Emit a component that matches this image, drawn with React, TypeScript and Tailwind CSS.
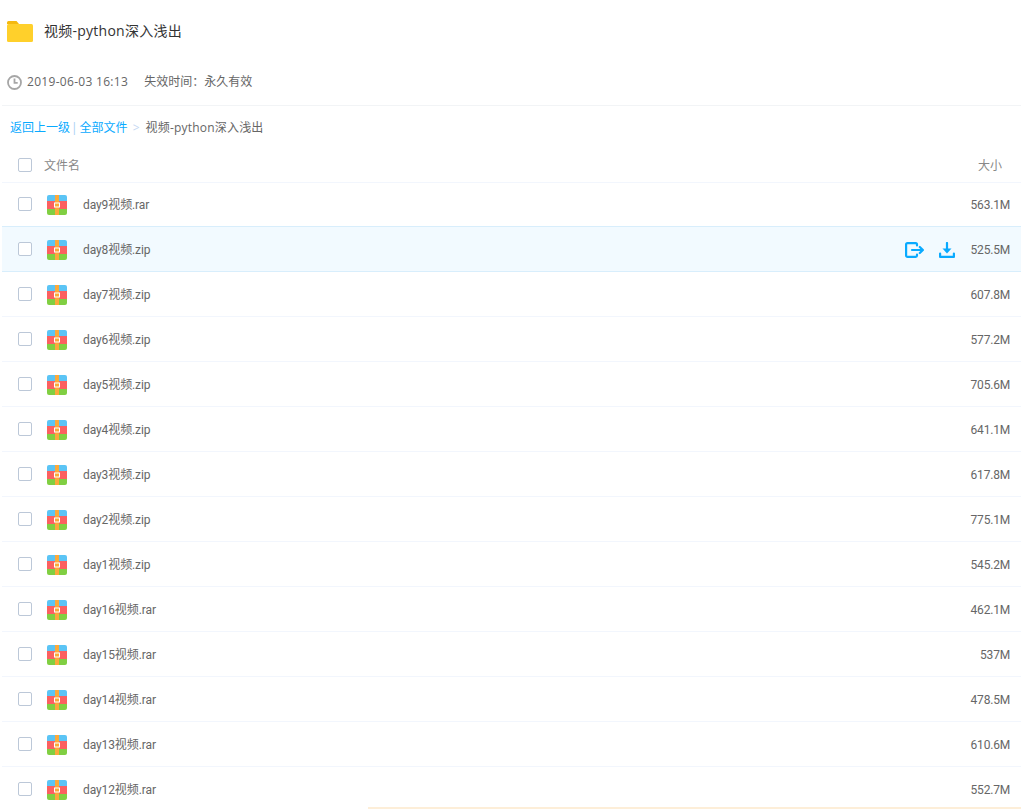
const files = [
  { name: 'day9视频.rar', size: '563.1M' },
  { name: 'day8视频.zip', size: '525.5M', active: true },
  { name: 'day7视频.zip', size: '607.8M' },
  { name: 'day6视频.zip', size: '577.2M' },
  { name: 'day5视频.zip', size: '705.6M' },
  { name: 'day4视频.zip', size: '641.1M' },
  { name: 'day3视频.zip', size: '617.8M' },
  { name: 'day2视频.zip', size: '775.1M' },
  { name: 'day1视频.zip', size: '545.2M' },
  { name: 'day16视频.rar', size: '462.1M' },
  { name: 'day15视频.rar', size: '537M' },
  { name: 'day14视频.rar', size: '478.5M' },
  { name: 'day13视频.rar', size: '610.6M' },
  { name: 'day12视频.rar', size: '552.7M' },
]

function FolderIcon() {
  return (
    <svg width="26" height="21" viewBox="0 0 26 21" className="shrink-0">
      <path d="M0 1.500A1.500 1.500 0 0 1 1.500 0h8L12 3H0z" fill="#f5b90f" />
      <rect x="0" y="3" width="26" height="18" rx="1.500" fill="#ffd02b" />
    </svg>
  )
}

function ClockIcon() {
  return (
    <svg width="15" height="15" viewBox="0 0 15 15" fill="none" stroke="#a6a6a6" strokeWidth="1.800" className="shrink-0">
      <circle cx="7.500" cy="7.500" r="6.500" />
      <path d="M7.500 3.500v4.300h3.200" />
    </svg>
  )
}

function ArchiveIcon() {
  return (
    <svg width="20" height="20" viewBox="0 0 20 20" className="block shrink-0">
      <path d="M2 0h16a2 2 0 0 1 2 2v4H0V2a2 2 0 0 1 2-2z" fill="#5bc4f5" />
      <rect x="0" y="6" width="20" height="8" fill="#fb6060" />
      <path d="M0 14h20v4a2 2 0 0 1-2 2H2a2 2 0 0 1-2-2z" fill="#80cf42" />
      <rect x="8" y="0" width="4" height="20" fill="#fba93a" />
      <rect x="7" y="7.500" width="6" height="5" fill="#fff" />
      <rect x="8" y="8.500" width="4" height="3" fill="#fba93a" />
    </svg>
  )
}

function Checkbox() {
  return <span className="block w-[14px] h-[14px] shrink-0 rounded-[2px] border border-[#bcc8d8] bg-white" />
}

function SaveIcon() {
  return (
    <svg width="19" height="16" viewBox="0 0 19 16" fill="none" stroke="#09aaff" strokeWidth="2.200" strokeLinecap="round" strokeLinejoin="round">
      <path d="M12 3.500V2.500a1.400 1.400 0 0 0-1.400-1.400H2.500A1.400 1.400 0 0 0 1.100 2.500v11a1.400 1.400 0 0 0 1.400 1.400h8.100a1.400 1.400 0 0 0 1.400-1.400v-1" />
      <path d="M7 8h10.800M14.800 5 17.900 8l-3.100 3" />
    </svg>
  )
}

function DownloadIcon() {
  return (
    <svg width="16" height="16" viewBox="0 0 16 16" fill="none" className="shrink-0">
      <path d="M8 1v8" stroke="#09aaff" strokeWidth="2.200" strokeLinecap="round" />
      <path d="M3.500 6.500h9L8 11.500z" fill="#09aaff" />
      <path d="M1.100 11.500v3.400h13.800v-3.400" stroke="#09aaff" strokeWidth="2.200" strokeLinecap="round" strokeLinejoin="round" />
    </svg>
  )
}

export default function App() {
  return (
    <div className="relative h-[809px] overflow-hidden bg-white pl-[2px] font-['Open_Sans','Noto_Sans_CJK_SC',sans-serif] text-[12px] text-[#666]">
      <div className="flex items-center gap-[11px] h-[62px] pl-[5px]">
        <FolderIcon />
        <h1 className="-mt-[2px] text-[14px] font-normal tracking-[0.25px] text-[#333]">视频-python深入浅出</h1>
      </div>
      <div className="flex items-center h-[44px] pl-[5px] pb-[3px] border-b border-[#f2f4f6]">
        <ClockIcon />
        <span className="ml-[5px] tracking-[0.3px]">2019-06-03 16:13</span>
        <span className="ml-[16px]">失效时间：永久有效</span>
      </div>
      <div className="flex items-center h-[42px] pl-[8px] pt-[1px]">
        <a className="text-[#09aaff]">返回上一级</a>
        <span className="ml-[1px] mr-[2px] text-[#a8d0f5]">|</span>
        <a className="text-[#09aaff]">全部文件</a>
        <span className="ml-[5px] mr-[6px] text-[#c5d8f3]">&gt;</span>
        <span className="tracking-[0.2px]">视频-python深入浅出</span>
      </div>
      <div className="flex items-center h-[35px] pl-[16px] pr-[19px] border-b border-[#f2f6fd] text-[#888]">
        <Checkbox />
        <span className="ml-[12px] mt-[2px]">文件名</span>
        <span className="ml-auto mt-[2px]">大小</span>
      </div>
      <div className="-mt-px font-['Roboto','Noto_Sans_CJK_SC',sans-serif]">
        {files.map((file) => (
          <div
            key={file.name}
            className={
              file.active
                ? 'relative -mt-px flex items-center h-[46px] pl-[16px] pr-[11px] border-y border-[#d8eefc] bg-[#f2faff]'
                : 'flex items-center h-[45px] pl-[16px] pr-[11px] border-b border-[#f2f6fd]'
            }
          >
            <Checkbox />
            <span className="ml-[15px] mt-[2px]">
              <ArchiveIcon />
            </span>
            <span className="ml-[16px] mt-[2px] tracking-[-0.1px]">{file.name}</span>
            <div className="ml-auto mt-[2px] flex items-center">
              {file.active && (
                <div className="flex items-center gap-[15px]">
                  <SaveIcon />
                  <DownloadIcon />
                </div>
              )}
              <span className="w-[55px] text-right tracking-[-0.2px]">{file.size}</span>
            </div>
          </div>
        ))}
      </div>
      <div className="absolute left-[368px] right-0 bottom-0 h-[2px] bg-[#fdeed8]" />
    </div>
  )
}
